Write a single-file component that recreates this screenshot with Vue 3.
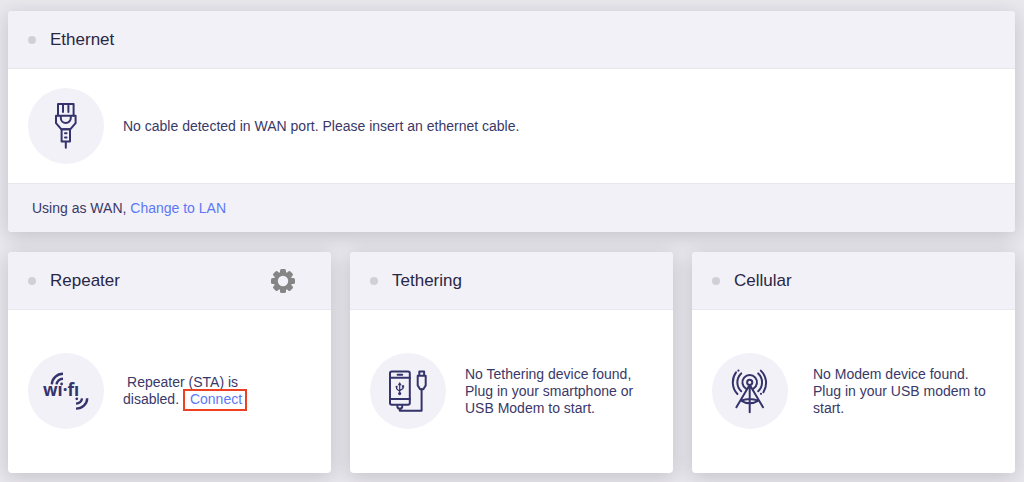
<script setup>
const gearTeeth = [0, 45, 90, 135, 180, 225, 270, 315]
</script>

<template>
  <main class="page">
    <section class="card">
      <header class="card-head">
        <span class="status"></span>
        <h2>Ethernet</h2>
      </header>
      <div class="card-body">
        <svg class="icon" viewBox="0 0 76 76" aria-hidden="true">
          <path d="M30 27.5V16h15.6v11.5M35 17v7M40.4 17v7" />
          <path d="M28 27.8h19.6v7.4l-5.2 6h-9.2l-5.2-6zM32.8 28v2a5 5 0 0 0 10 0v-2" />
          <path d="M33.6 41.2h8.4v12.2h-8.4zM37.8 53.4v6.4M37 45.2h1.6M37 49.4h1.6" />
        </svg>
        <p class="message">No cable detected in WAN port. Please insert an ethernet cable.</p>
      </div>
      <footer class="card-foot">Using as WAN, <a href="#lan">Change to LAN</a></footer>
    </section>

    <div class="row">
      <section class="card">
        <header class="card-head">
          <span class="status"></span>
          <h2>Repeater</h2>
          <button class="settings" type="button" aria-label="Repeater settings">
            <svg viewBox="-12 -12 24 24" aria-hidden="true">
              <rect v-for="angle in gearTeeth" :key="angle" x="-3" y="-12" width="6" height="7" rx="1.6" :transform="`rotate(${angle})`" />
              <circle r="7.2" />
            </svg>
          </button>
        </header>
        <div class="card-body tall">
          <svg class="icon wifi" viewBox="0 0 76 76" aria-hidden="true">
            <path d="M23.8 31.4A11.2 11 0 0 1 35 20.8M28.6 31.4A6.4 6 0 0 1 35 25.8" />
            <path d="M54 45.4A6.2 5.6 0 0 1 48 50.6M59.2 45.2A11 10.5 0 0 1 48 55.6" />
            <circle class="solid" cx="33.6" cy="31" r="1.4" />
            <circle class="solid" cx="48.8" cy="45.8" r="1.4" />
            <text x="15" y="43">wı·fı</text>
          </svg>
          <p class="message centered">Repeater (STA) is<br>disabled. <a class="connect" href="#connect">Connect</a></p>
        </div>
      </section>

      <section class="card">
        <header class="card-head">
          <span class="status"></span>
          <h2>Tethering</h2>
        </header>
        <div class="card-body tall">
          <svg class="icon" viewBox="0 0 76 76" aria-hidden="true">
            <rect x="20" y="18.4" width="19.8" height="33.4" rx="1.8" />
            <path d="M20 24.8h19.8M20 46h19.8M27.6 21.7h4.6" />
            <path class="fine" d="M29.7 31v10M26.6 34.2v1.6l3.1 2.6M33 33.4v2l-3.3 2.4" />
            <path class="solid" d="M29.7 29l2 3.2h-4z" />
            <circle class="solid" cx="29.7" cy="40.6" r="1.6" />
            <circle class="solid" cx="26.6" cy="33.8" r="1.1" />
            <path class="solid" d="M31.9 32.2h2.2v2.2h-2.2z" />
            <path d="M27.4 52v2.2l1 1.4h2.8l1-1.4V52M29.8 55.6v2.2h21.8V36" />
            <path d="M49.3 22.8v-4.3h4.8v4.3M47.7 22.8h8v9.6l-2.4 3.8h-3.2l-2.4-3.8z" />
          </svg>
          <p class="message">No Tethering device found,<br>Plug in your smartphone or<br>USB Modem to start.</p>
        </div>
      </section>

      <section class="card">
        <header class="card-head">
          <span class="status"></span>
          <h2>Cellular</h2>
        </header>
        <div class="card-body tall">
          <svg class="icon" viewBox="0 0 76 76" aria-hidden="true">
            <circle cx="37.7" cy="29.3" r="2.6" />
            <path d="M34 35.6a7.3 7.3 0 1 1 7.4 0" />
            <path d="M29.2 20.4a12.2 12.2 0 0 0 0 17.8M46.2 20.4a12.2 12.2 0 0 1 0 17.8" />
            <path d="M24 19.4a17.1 17.1 0 0 0 1.4 21.6M48.8 17.6a17.1 17.1 0 0 1 2.6 21.6" />
            <circle class="solid" cx="26.4" cy="17.6" r="1.1" />
            <circle class="solid" cx="49" cy="40.8" r="1.1" />
            <path d="M37.7 32v27.2M36.7 33.4L24.4 54.2M38.7 33.4L51 54.2M29 47.6q8.7-3.2 17.4 0M29 47.6q8.7 5.4 17.4 0" />
          </svg>
          <p class="message inset">No Modem device found.<br>Plug in your USB modem to<br>start.</p>
        </div>
      </section>
    </div>
  </main>
</template>

<style>
body {
  margin: 0;
  background: #e9e8ed;
}
</style>

<style scoped>
.page {
  box-sizing: border-box;
  min-height: 100vh;
  padding: 11px 9px 9px 8px;
  display: flex;
  flex-direction: column;
  gap: 20px;
  background: #e9e8ed;
  color: #3a3868;
  font: 14px/17px "Liberation Sans", Arial, sans-serif;
}

.row {
  display: grid;
  grid-template-columns: repeat(3, 1fr);
  gap: 19px;
}

.card {
  border-radius: 4px;
  background: #fff;
  box-shadow: 0 4px 20px rgba(20, 18, 40, 0.18);
}

.card-head {
  box-sizing: border-box;
  height: 58px;
  padding: 0 36px 0 20px;
  display: flex;
  align-items: center;
  border-bottom: 1px solid #e8e7ed;
  border-radius: 4px 4px 0 0;
  background: #f2f1f7;
}

.status {
  width: 8px;
  height: 8px;
  margin-right: 14px;
  border-radius: 50%;
  background: #d1d0d6;
}

h2 {
  margin: 0;
  color: #292746;
  font-size: 17px;
  font-weight: 400;
  line-height: 20px;
}

.settings {
  width: 24px;
  height: 24px;
  margin-left: auto;
  padding: 0;
  border: 0;
  background: none;
}

.settings svg {
  display: block;
  fill: #858585;
}

.settings circle {
  fill: #f2f1f7;
  stroke: #858585;
  stroke-width: 4px;
}

.card-body {
  padding: 19px 20px;
  display: flex;
  align-items: center;
  gap: 19px;
}

.tall {
  padding: 43px 20px 44px;
}

.icon {
  flex: none;
  width: 76px;
  height: 76px;
  border-radius: 50%;
  background: #f2f1f7;
  fill: none;
  stroke: #35336b;
  stroke-width: 2px;
  stroke-linecap: round;
  stroke-linejoin: round;
}

.wifi path {
  stroke-width: 2.4px;
  stroke-linecap: butt;
}

.icon .fine {
  stroke-width: 1.2px;
}

.icon .solid {
  fill: #35336b;
  stroke: none;
}

.icon text {
  fill: #35336b;
  stroke: none;
  font: 700 17px "Noto Sans", sans-serif;
}

.message {
  margin: 0;
}

.centered {
  text-align: center;
}

.inset {
  margin-left: 6px;
}

a {
  color: #5c78f5;
  text-decoration: none;
}

.connect {
  position: relative;
  margin-left: 7px;
}

.connect::after {
  content: "";
  position: absolute;
  inset: -2px -5px -4px -7px;
  border: 2px solid #ee4023;
}

.card-foot {
  padding: 16px 24px 15px;
  border-top: 1px solid #e8e7ed;
  border-radius: 0 0 4px 4px;
  background: #f2f1f7;
}
</style>
